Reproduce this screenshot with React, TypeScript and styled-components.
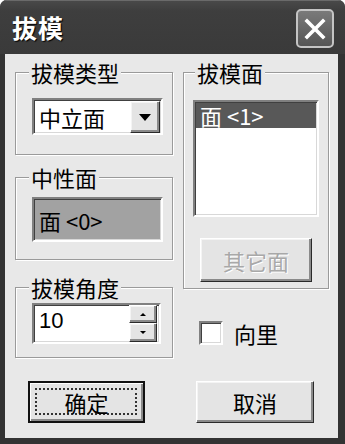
import styled, {createGlobalStyle} from "styled-components";

const GlobalStyle = createGlobalStyle`
  html, body {
    margin: 0;
    padding: 0;
    background: #ffffff;
  }
  body {
    font-family: "Noto Sans CJK SC", "Liberation Sans", sans-serif;
  }
`

const Window = styled.div`
  width: 345px;
  height: 444px;
  box-sizing: border-box;
  background: #333333;
  border-radius: 7px 7px 0 0;
  display: flex;
  flex-direction: column;
  overflow: hidden;
`

const TitleBar = styled.div`
  height: 54px;
  flex-shrink: 0;
  display: flex;
  align-items: center;
  justify-content: space-between;
  padding: 0 11px 0 12px;
  box-sizing: border-box;
  background: linear-gradient(#4a4a4a 0%, #3e3e3e 20%, #3a3a3a 100%);
  box-shadow: inset 0 1px 0 #6a6a6a;
`

const Title = styled.span`
  color: #ffffff;
  font-size: 25px;
  font-weight: 700;
  line-height: 30px;
  letter-spacing: 1px;
  text-shadow: 1px 1px 1px #000000;
`

const CloseButton = styled.div`
  width: 38px;
  height: 39px;
  box-sizing: border-box;
  border: 2px solid #c4c4c4;
  border-radius: 5px;
  background: linear-gradient(#7a7a7a, #555555);
  display: flex;
  align-items: center;
  justify-content: center;
  margin-top: 3px;
`

const Body = styled.div`
  flex: 1;
  margin: 0 7px 6px 5px;
  background: #e8e8e8;
  display: flex;
  flex-direction: column;
  padding: 6px 9px 0 10px;
  font-size: 22px;
  color: #000000;
`

const Columns = styled.div`
  display: flex;
  gap: 10px;
  align-items: flex-start;
`

const Column = styled.div<{ $width: number }>`
  width: ${p => p.$width}px;
  display: flex;
  flex-direction: column;
`

const Group = styled.fieldset<{ $height: number; $top: number; $pad: number }>`
  box-sizing: border-box;
  height: ${p => p.$height}px;
  margin: 0;
  padding: ${p => p.$top}px 0 0 ${p => p.$pad}px;
  border: 1px solid #9a9a9a;
  box-shadow: inset 1px 1px 0 #ffffff, 1px 1px 0 #ffffff;
  min-width: 0;
`

const Legend = styled.legend<{ $shift: number }>`
  margin-left: ${p => p.$shift}px;
  padding: 0 2px;
  font-size: 22px;
  line-height: 24px;
  height: 24px;
  background: #e8e8e8;
`

const Sunken = styled.div<{ $width: number; $height: number; $bg: string }>`
  box-sizing: border-box;
  width: ${p => p.$width}px;
  height: ${p => p.$height}px;
  border: 2px solid;
  border-color: #808080 #ffffff #ffffff #808080;
  box-shadow: inset 1px 1px 0 #404040, inset -1px -1px 0 #d8d8d8;
  background: ${p => p.$bg};
  display: flex;
  align-items: center;
`

const FieldText = styled.span`
  padding-left: 5px;
  flex: 1;
  line-height: 26px;
`

const NumberText = styled(FieldText)`
  font-family: "Liberation Sans", "Noto Sans CJK SC", sans-serif;
  align-self: flex-start;
  padding-top: 3px;
`

const RaisedButton = styled.div<{ $width: number; $height: number }>`
  box-sizing: border-box;
  width: ${p => p.$width}px;
  height: ${p => p.$height}px;
  border: 1px solid;
  border-color: #ffffff #2a2a2a #2a2a2a #ffffff;
  box-shadow: inset -2px -2px 0 #8a8a8a, inset 1px 1px 0 #f4f4f4;
  background: #e4e4e4;
  display: flex;
  align-items: center;
  justify-content: center;
`

const DropButton = styled(RaisedButton)`
  margin: 1px 1px 0 0;
  align-self: flex-start;
`

const Spinner = styled.div`
  display: flex;
  flex-direction: column;
  align-self: flex-start;
  margin: 0 2px 0 0;
`

const ListBox = styled(Sunken)`
  flex-direction: column;
  align-items: stretch;
  padding: 1px 1px;
`

const ListItem = styled.div<{ $selected?: boolean }>`
  height: 25px;
  line-height: 25px;
  padding-left: 4px;
  background: ${p => (p.$selected ? "#585858" : "transparent")};
  color: ${p => (p.$selected ? "#ffffff" : "#000000")};
`

const DisabledButton = styled(RaisedButton)`
  margin: 21px 0 0 7px;
  color: #a8a8a8;
  text-shadow: 1px 1px 0 #ffffff;
`

const CheckRow = styled.label`
  display: flex;
  align-items: center;
  gap: 11px;
  margin: 32px 0 0 16px;
  line-height: 24px;
`

const CheckBox = styled.span`
  box-sizing: border-box;
  width: 24px;
  height: 24px;
  border: 2px solid;
  border-color: #808080 #ffffff #ffffff #808080;
  box-shadow: inset 1px 1px 0 #404040, inset -1px -1px 0 #d8d8d8;
  background: #ffffff;
`

const ButtonRow = styled.div`
  display: flex;
  gap: 51px;
  margin: 23px 0 0 13px;
`

const DialogButton = styled(RaisedButton)<{ $default?: boolean }>`
  border: ${p => (p.$default ? "2px solid #111111" : "1px solid")};
  border-color: ${p => (p.$default ? "#111111" : "#ffffff #2a2a2a #2a2a2a #ffffff")};
  box-shadow: ${p =>
    p.$default
      ? "inset 1px 1px 0 #ffffff, inset -2px -2px 0 #8a8a8a"
      : "inset -2px -2px 0 #8a8a8a, inset 1px 1px 0 #f4f4f4"};
  position: relative;
`

const FocusRing = styled.span`
  position: absolute;
  inset: 5px 6px 6px 5px;
  border: 2px dotted #333333;
`

const Caption = styled.span`
  position: relative;
  line-height: 26px;
`

function Arrow({w, h}: { w: number; h: number }) {
    return (
        <svg width={w} height={h} viewBox={`0 0 ${w} ${h}`}>
            <polygon points={`0,0 ${w},0 ${w / 2},${h}`} fill="#000000"/>
        </svg>
    );
}

function UpArrow({w, h}: { w: number; h: number }) {
    return (
        <svg width={w} height={h} viewBox={`0 0 ${w} ${h}`}>
            <polygon points={`0,${h} ${w},${h} ${w / 2},0`} fill="#000000"/>
        </svg>
    );
}

export default function App() {
    return (
        <>
            <GlobalStyle/>
            <Window>
                <TitleBar>
                    <Title>拔模</Title>
                    <CloseButton>
                        <svg width="24" height="24" viewBox="0 0 24 24">
                            <path d="M4 4 L20 20 M20 4 L4 20" stroke="#ffffff" strokeWidth="3.6" strokeLinecap="square"/>
                        </svg>
                    </CloseButton>
                </TitleBar>
                <Body>
                    <Columns>
                        <Column $width={158}>
                            <Group $height={95} $top={14} $pad={16}>
                                <Legend $shift={-3}>拔模类型</Legend>
                                <Sunken $width={131} $height={37} $bg="#ffffff">
                                    <FieldText>中立面</FieldText>
                                    <DropButton $width={30} $height={32}>
                                        <Arrow w={12} h={7}/>
                                    </DropButton>
                                </Sunken>
                            </Group>
                            <Group $height={95} $top={8} $pad={16} style={{marginTop: 10}}>
                                <Legend $shift={-3}>中性面</Legend>
                                <Sunken $width={131} $height={45} $bg="#a2a2a2">
                                    <FieldText>面 &lt;0&gt;</FieldText>
                                </Sunken>
                            </Group>
                            <Group $height={83} $top={4} $pad={16} style={{marginTop: 15}}>
                                <Legend $shift={-3}>拔模角度</Legend>
                                <Sunken $width={129} $height={41} $bg="#ffffff">
                                    <NumberText>10</NumberText>
                                    <Spinner>
                                        <RaisedButton $width={28} $height={18}>
                                            <UpArrow w={6} h={3}/>
                                        </RaisedButton>
                                        <RaisedButton $width={28} $height={19}>
                                            <Arrow w={6} h={3}/>
                                        </RaisedButton>
                                    </Spinner>
                                </Sunken>
                            </Group>
                        </Column>
                        <Column $width={146}>
                            <Group $height={229} $top={16} $pad={9}>
                                <Legend $shift={2}>拔模面</Legend>
                                <ListBox $width={126} $height={117} $bg="#ffffff">
                                    <ListItem $selected>面 &lt;1&gt;</ListItem>
                                </ListBox>
                                <DisabledButton $width={112} $height={44}>其它面</DisabledButton>
                            </Group>
                            <CheckRow>
                                <CheckBox/>
                                向里
                            </CheckRow>
                        </Column>
                    </Columns>
                    <ButtonRow>
                        <DialogButton $width={117} $height={42} $default>
                            <FocusRing/>
                            <Caption>确定</Caption>
                        </DialogButton>
                        <DialogButton $width={118} $height={42}>
                            <Caption>取消</Caption>
                        </DialogButton>
                    </ButtonRow>
                </Body>
            </Window>
        </>
    );
}
